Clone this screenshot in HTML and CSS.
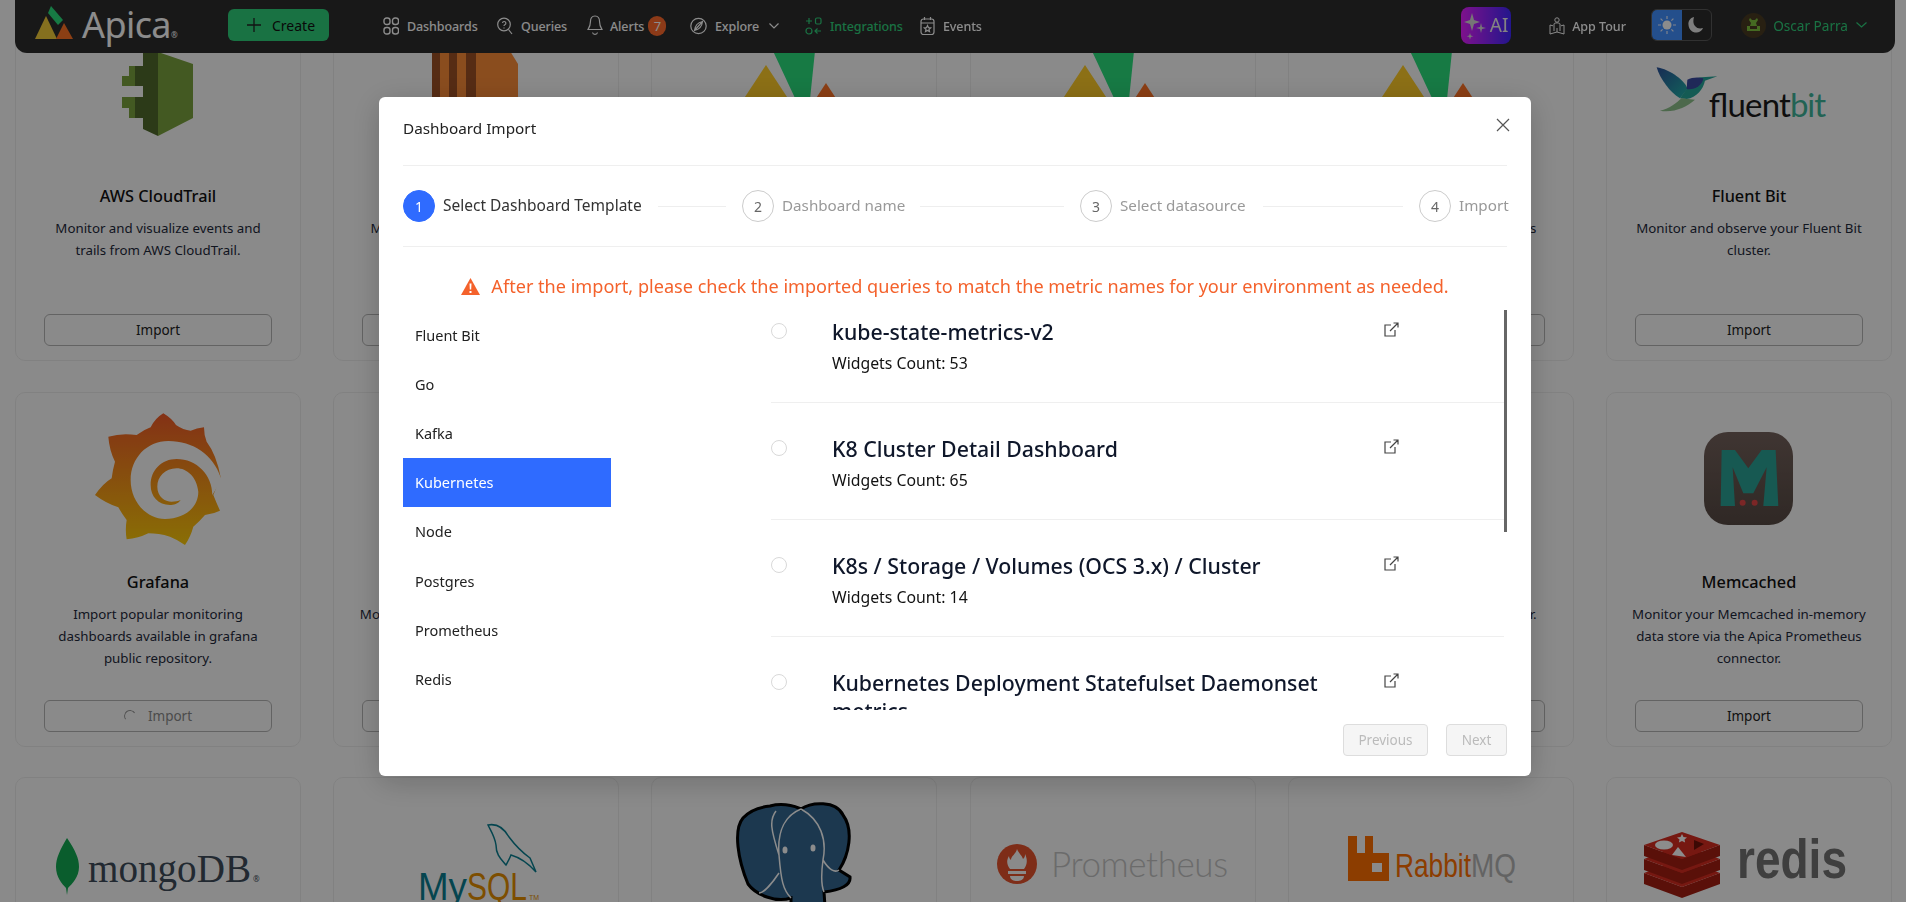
FILE: index.html
```html
<!DOCTYPE html>
<html lang="en">
<head>
<meta charset="utf-8">
<title>Integrations</title>
<link rel="stylesheet" href="styles.css">
</head>
<body>
<header class="nav">
  <div class="brand">
    <svg class="brand-mark" width="40" height="36" viewBox="0 0 40 36"><polygon points="11,10 22,33 0,33" fill="#f2cd3a"/><polygon points="16,0 28,14 23,19 13,7" fill="#2ade7d"/><polygon points="29,17 38,33 21,33" fill="#ff7326"/></svg>
    <span class="brand-name">Apica<sup class="reg">®</sup></span>
  </div>
  <button class="create"><svg width="14" height="14" viewBox="0 0 14 14"><path d="M7 0v14M0 7h14" stroke="#222" stroke-width="1.3"/></svg><span>Create</span></button>
  <nav class="links">
    <a class="link w-dash"><svg width="16" height="18" viewBox="0 0 16 18" fill="none" stroke="currentColor" stroke-width="1.4"><rect x="1" y="1" width="6" height="6.5" rx="2.5"/><rect x="9.5" y="1" width="6" height="6.5" rx="2.5"/><rect x="1" y="10.5" width="6" height="6.5" rx="2.5"/><rect x="9.5" y="10.5" width="6" height="6.5" rx="2.5"/></svg><span>Dashboards</span></a>
    <a class="link w-query"><svg width="16" height="18" viewBox="0 0 16 18" fill="none" stroke="currentColor" stroke-width="1.2"><circle cx="7" cy="7.5" r="6.3"/><path d="M11.5 12.5l3.5 4.5M5.5 6a1.7 1.7 0 1 1 2.3 1.8c-.6.3-.8.7-.8 1.3M7 10.5v1"/></svg><span>Queries</span></a>
    <a class="link w-alert"><svg width="16" height="22" viewBox="0 0 16 22" fill="none" stroke="currentColor" stroke-width="1.2"><path d="M8 1c3.2 0 4.6 2.6 4.6 6 0 4 1.4 5.8 2.4 7.500H1C2 12.800 3.400 11 3.400 7 3.400 3.600 4.800 1 8 1zM5.500 17.500c.5 2.500 4.500 2.500 5 0"/></svg><span>Alerts</span><b class="badge">7</b></a>
    <a class="link w-explore"><svg width="17" height="18" viewBox="0 0 17 18" fill="none" stroke="currentColor" stroke-width="1.2"><circle cx="8.5" cy="9" r="7.7"/><path d="M4.500 13.500C5 9 8 5.500 12.500 4.500 12 9 9 12.500 4.500 13.500zM4.500 13.500L12.500 4.500"/></svg><span>Explore</span><svg class="chev" width="10" height="6" viewBox="0 0 10 6" fill="none" stroke="currentColor" stroke-width="1.2"><path d="M.5.500L5 5l4.500-4.500"/></svg></a>
    <a class="link current w-integ"><svg width="17" height="18" viewBox="0 0 17 18" fill="none" stroke="currentColor" stroke-width="1.2"><path d="M4 1v6M1 4h6"/><rect x="10.5" y="1" width="5.5" height="6" rx="1.5"/><circle cx="4" cy="14" r="3"/><path d="M16 14h-6M12.500 11.500L10 14l2.500 2.500"/></svg><span>Integrations</span></a>
    <a class="link"><svg width="15" height="20" viewBox="0 0 15 20" fill="none" stroke="currentColor" stroke-width="1.2"><rect x="1" y="3" width="13" height="15.5" rx="2.5"/><path d="M1 7h13M4.500 1v3M10.500 1v3"/><path d="M7.500 9.500l1 2.200 2.200.2-1.700 1.500.5 2.200-2-1.200-2 1.200.5-2.200-1.700-1.500 2.200-.2z"/></svg><span>Events</span></a>
  </nav>
  <div class="nav-end">
    <button class="ai"><svg width="22" height="30" viewBox="0 0 22 30" fill="#d8d8d8"><path d="M8 3l2 7 6 2-6 2-2 7-2-7-6-2 6-2z"/><path d="M17 13l1 4 4 1-4 1-1 4-1-4-4-1 4-1z"/><path d="M6 23l.8 2.500 2.500.8-2.500.8-.8 2.500-.8-2.500-2.500-.8 2.500-.8z"/></svg><span>AI</span></button>
    <a class="tour"><svg width="16" height="18" viewBox="0 0 16 18" fill="none" stroke="currentColor" stroke-width="1"><circle cx="8" cy="3" r="2.200"/><path d="M5 7c0-1.500 6-1.500 6 0v7M5 7v7M1 8v9l7-2 7 2V8l-3 .8M1 8l3 .8M8 11v4"/></svg><span>App Tour</span></a>
    <div class="mode">
      <span class="mode-sun"><svg width="20" height="20" viewBox="0 0 20 20"><circle cx="10" cy="10" r="4.5" fill="#fff"/><g stroke="#e8eeff" stroke-width="1.2"><path d="M10 1v3M10 16v3M1 10h3M16 10h3M3.600 3.600l2 2M14.400 14.400l2 2M3.600 16.400l2-2M14.400 5.600l2-2"/></g></svg></span>
      <span class="mode-moon"><svg width="16" height="18" viewBox="0 0 16 18"><path d="M6 1c-4 1-6 4-5.500 8C1 14 5 17 9 16.500c3-.3 5-2 6-4.500-3 1-6 .5-8-2C5 8 5 4 6 1z" fill="#e6e6e6"/></svg></span>
    </div>
    <a class="user"><svg class="avatar" width="25" height="25" viewBox="0 0 25 25"><circle cx="12.500" cy="12.500" r="12.500" fill="#4a3b22"/><path d="M6 18v-5h3l1-3-2-3 1-2 2 2h3l2-2 1 2-2 3 1 3h3v5z" fill="#7fc23e"/><rect x="9" y="13" width="7" height="3" fill="#4a3b22"/></svg><span>Oscar Parra</span><svg class="chev" width="11" height="6" viewBox="0 0 11 6" fill="none" stroke="currentColor" stroke-width="1.2"><path d="M.5.500l5 4.500 5-4.500"/></svg></a>
  </div>
</header>

<main class="grid">
  <article class="card">
    <div class="logo"><svg width="286" height="160" viewBox="0 0 286 160"><polygon points="143,38 178,50 178,104 143,122" fill="#7ba33e"/><polygon points="128,38 143,38 143,122 128,115" fill="#506a2c"/><rect x="114" y="52" width="6" height="20" fill="#7ba33e"/><rect x="120" y="52" width="8" height="20" fill="#506a2c"/><rect x="107" y="62" width="7" height="10" fill="#7ba33e"/><rect x="114" y="83" width="6" height="21" fill="#7ba33e"/><rect x="120" y="83" width="8" height="21" fill="#506a2c"/><rect x="107" y="83" width="7" height="11" fill="#7ba33e"/></svg></div>
    <h3>AWS CloudTrail</h3><p>Monitor and visualize events and<br>trails from AWS CloudTrail.</p>
    <button class="import">Import</button>
  </article>
  <article class="card covered">
    <div class="logo"><svg width="286" height="160" viewBox="0 0 286 160"><polygon points="104,37 177,37 185,50 185,160 99,160 99,50" fill="#fb8c38"/><rect x="99" y="37" width="44" height="123" fill="#9d5025"/><rect x="107" y="37" width="9" height="123" fill="#fb8c38"/><rect x="124" y="37" width="9" height="123" fill="#fb8c38"/></svg></div>
    <p>Monitor your AWS services and all</p>
    <button class="import"></button>
  </article>
  <article class="card covered">
    <div class="logo"><svg width="286" height="160" viewBox="0 0 286 160"><polygon points="115,51 167,130 63,130" fill="#ffcc28"/><polygon points="122,37 164,37 158,95 150,97" fill="#2ade7d"/><polygon points="175,69 215,130 135,130" fill="#ff7326"/></svg></div>
    <button class="import"></button>
  </article>
  <article class="card covered">
    <div class="logo"><svg width="286" height="160" viewBox="0 0 286 160"><polygon points="115,51 167,130 63,130" fill="#ffcc28"/><polygon points="122,37 164,37 158,95 150,97" fill="#2ade7d"/><polygon points="175,69 215,130 135,130" fill="#ff7326"/></svg></div>
    <button class="import"></button>
  </article>
  <article class="card covered">
    <div class="logo"><svg width="286" height="160" viewBox="0 0 286 160"><polygon points="115,51 167,130 63,130" fill="#ffcc28"/><polygon points="122,37 164,37 158,95 150,97" fill="#2ade7d"/><polygon points="175,69 215,130 135,130" fill="#ff7326"/></svg></div>
    <p>Monitor your host and all services</p>
    <button class="import"></button>
  </article>
  <article class="card">
    <div class="logo"><svg width="286" height="160" viewBox="0 0 286 160"><defs><linearGradient id="bw" x1="0" y1="0" x2="1" y2="1"><stop offset="0" stop-color="#2a4f9a"/><stop offset="1" stop-color="#22b5a8"/></linearGradient></defs><g transform="translate(-76,25) scale(.3333)"><path d="M380 85C420 90 470 130 472 150L450 178C420 160 390 120 380 85Z" fill="url(#bw)"/><path d="M470 150C480 125 500 115 515 115L562 112 525 125C520 150 500 175 470 180L450 178Z" fill="#26a69a"/><path d="M472 122C485 115 505 113 520 118 518 140 490 155 470 150Z" fill="#3a4aa0"/><path d="M390 215C420 210 440 190 455 178L495 182C470 205 430 222 390 215Z" fill="#8cc08a"/></g><text class="lg-fluent" x="102" y="103" textLength="82" lengthAdjust="spacing">fluent</text><text class="lg-bit" x="184" y="103" textLength="36" lengthAdjust="spacing">bit</text></svg></div>
    <h3>Fluent Bit</h3><p>Monitor and observe your Fluent Bit<br>cluster.</p>
    <button class="import">Import</button>
  </article>

  <article class="card">
    <div class="logo"><svg width="286" height="160" viewBox="0 0 286 160"><defs><linearGradient id="gf" gradientUnits="userSpaceOnUse" x1="0" y1="100" x2="0" y2="495"><stop offset="0" stop-color="#f05a28"/><stop offset="1" stop-color="#fbca0a"/></linearGradient></defs><g transform="translate(-15,-20) scale(.3333)"><path d="M490 100Q515 115 528 135Q550 150 572 152Q590 145 612 142Q612 165 620 185Q650 225 662 292L640 345Q650 370 660 392Q640 402 615 405Q598 425 580 440Q572 470 555 495Q535 480 510 470Q475 460 445 460Q415 475 380 478Q375 450 380 420Q365 400 355 382Q318 370 285 345Q310 310 335 295Q338 270 345 245Q328 210 325 170Q365 158 410 165Q430 150 452 142Q465 115 490 100Z" fill="url(#gf)"/><path d="M662 292C640 225 580 183 505 183C440 183 392 235 392 300C392 365 440 417 495 417C550 417 595 385 595 335C590 290 560 265 530 265C495 265 472 290 472 320C472 350 495 365 515 365C525 365 535 364 542 360C535 372 520 375 510 375C475 375 452 350 452 315C452 270 485 237 530 237C590 237 637 285 637 345L665 300Z" fill="#fcfcfc"/></g></svg></div>
    <h3>Grafana</h3><p>Import popular monitoring<br>dashboards available in grafana<br>public repository.</p>
    <button class="import busy"><i class="spin"></i>Import</button>
  </article>
  <article class="card covered">
    <div class="logo"></div>
    <p>Monitor your host infrastructure with</p>
    <button class="import"></button>
  </article>
  <article class="card covered">
    <div class="logo"></div>
    <button class="import"></button>
  </article>
  <article class="card covered">
    <div class="logo"></div>
    <button class="import"></button>
  </article>
  <article class="card covered">
    <div class="logo"></div>
    <p>Monitor logs using this connector.</p>
    <button class="import"></button>
  </article>
  <article class="card">
    <div class="logo"><svg width="286" height="160" viewBox="0 0 286 160"><defs><linearGradient id="mc" x1="0" y1="0" x2="0" y2="1"><stop offset="0" stop-color="#74625c"/><stop offset="1" stop-color="#574a44"/></linearGradient></defs><rect x="98" y="32" width="89" height="93" rx="24" fill="url(#mc)"/><g transform="translate(-76,-20) scale(.3333)"><path d="M575 210H615L655 265 695 210H737L745 378H700L710 262 670 340H640L608 262 615 378H572Z" fill="#2aa296"/><circle cx="638" cy="368" r="9" fill="#e04545"/><circle cx="674" cy="368" r="9" fill="#e04545"/></g></svg></div>
    <h3>Memcached</h3><p>Monitor your Memcached in-memory<br>data store via the Apica Prometheus<br>connector.</p>
    <button class="import">Import</button>
  </article>

  <article class="card">
    <div class="logo"><svg width="286" height="160" viewBox="0 0 286 160"><path d="M52 53C60 65 64 73 64 82 64 92 57 99 53 103L52 110 51 103C47 99 41 92 41 82 41 73 45 65 52 53Z" fill="#13aa52"/><text class="lg-mongo" x="73" y="97" textLength="163" lengthAdjust="spacingAndGlyphs">mongoDB</text><text class="lg-reg" x="238" y="97">®</text></svg></div>
  </article>
  <article class="card">
    <div class="logo"><svg width="286" height="160" viewBox="0 0 286 160"><path d="M155 40C165 38 172 45 176 52 182 60 190 68 197 73L203 87C195 78 185 72 178 70 176 75 174 78 173 80 168 74 163 70 163 60 162 52 158 46 155 40Z" fill="none" stroke="#0a7f91" stroke-width="1.5"/><text class="lg-my" x="85" y="115" textLength="49" lengthAdjust="spacingAndGlyphs">My</text><text class="lg-sql" x="134" y="115" textLength="60" lengthAdjust="spacingAndGlyphs">SQL</text><text class="lg-tm" x="196" y="115">TM</text></svg></div>
  </article>
  <article class="card">
    <div class="logo"><svg width="286" height="160" viewBox="0 0 286 160"><path d="M119 21C135 17 145 22 150 24 160 17 185 15 192 30 203 45 198 70 188 85L199 92C200 100 190 105 173 107L176 150H140V113C125 118 105 110 97 99 87 75 82 45 92 33 100 24 110 22 119 21Z" fill="#336791" stroke="#000" stroke-width="3"/><path d="M150 24C135 30 126 45 128 70 130 95 132 105 140 113M150 24C170 35 176 55 172 75 170 90 170 100 173 107M128 70C120 45 118 35 125 26M128 88C120 100 112 108 108 108M172 75C178 85 184 88 188 85" fill="none" stroke="#fff" stroke-width="1.5"/><ellipse cx="134" cy="65" rx="2.5" ry="3.5" fill="#fff"/><ellipse cx="162" cy="63" rx="2.5" ry="3.5" fill="#fff"/></svg></div>
  </article>
  <article class="card">
    <div class="logo"><svg width="286" height="160" viewBox="0 0 286 160"><circle cx="47" cy="79" r="20" fill="#e6522c"/><path d="M47 64C49 69 52 70 53 74 55 72 55 71 55 69 58 75 57 80 54 84H40C37 80 36 76 39 71 39 73 40 74 41 75 41 71 46 69 47 64Z" fill="#fcfcfc"/><path d="M38 86H56V89H38ZM40 91H54C54 95 50 96 47 96 44 96 40 95 40 91Z" fill="#fcfcfc"/><text class="lg-prom" x="81" y="92" textLength="177" lengthAdjust="spacing">Prometheus</text></svg></div>
  </article>
  <article class="card">
    <div class="logo"><svg width="286" height="160" viewBox="0 0 286 160"><path fill-rule="evenodd" d="M60 51H69V68H77V51H85V68H101V96H60ZM84 78V87H94V78Z" fill="#ff6f00"/><text class="lg-rabbit" x="107" y="92" textLength="76" lengthAdjust="spacingAndGlyphs">Rabbit</text><text class="lg-mq" x="183" y="92" textLength="45" lengthAdjust="spacingAndGlyphs">MQ</text></svg></div>
  </article>
  <article class="card">
    <div class="logo"><svg width="286" height="160" viewBox="0 0 286 160"><path d="M38 88V99L76 113 114 99V88L76 102Z" fill="#a41e11"/><path d="M38 88L76 74 114 88 76 102Z" fill="#d82c20"/><path d="M38 74V85L76 99 114 85V74L76 88Z" fill="#a41e11"/><path d="M38 74L76 60 114 74 76 88Z" fill="#d82c20"/><path d="M38 60V71L76 85 114 71V60L76 74Z" fill="#a41e11"/><path d="M38 60L76 47 114 60 76 74Z" fill="#d82c20"/><ellipse cx="58" cy="60" rx="9" ry="4.5" fill="#fff"/><path d="M76 49l1.500 3 3.500.5-2.500 2 .6 3-3.100-1.500-3.100 1.500.6-3-2.500-2 3.500-.5z" fill="#fff"/><path d="M72 62L80 72 66 70Z" fill="#fff"/><path d="M88 55L98 59 88 65Z" fill="#6d1109"/><text class="lg-redis" x="131" y="93" textLength="110" lengthAdjust="spacingAndGlyphs">redis</text></svg></div>
  </article>
</main>

<div class="overlay"></div>

<section class="modal">
  <header class="modal-head">
    <h2>Dashboard Import</h2>
    <button class="close" aria-label="Close"><svg width="14" height="14" viewBox="0 0 14 14"><path d="M1 1l12 12M13 1L1 13" stroke="#555" stroke-width="1.2"/></svg></button>
  </header>
  <ol class="steps">
    <li class="step on s1"><i>1</i><span>Select Dashboard Template</span></li><li class="rail r1"></li>
    <li class="step s2"><i>2</i><span>Dashboard name</span></li><li class="rail r2"></li>
    <li class="step s3"><i>3</i><span>Select datasource</span></li><li class="rail r3"></li>
    <li class="step s4"><i>4</i><span>Import</span></li>
  </ol>
  <div class="warn">
    <svg width="19" height="17" viewBox="0 0 19 17"><path d="M9.500 0L19 17H0Z" fill="#f4622c"/><path d="M8.500 5.500h2l-.3 6h-1.400zM8.500 13h2v2h-2z" fill="#fff"/></svg>
    <span>After the import, please check the imported queries to match the metric names for your environment as needed.</span>
  </div>
  <div class="body">
    <ul class="cats">
      <li>Fluent Bit</li><li>Go</li><li>Kafka</li><li class="sel">Kubernetes</li><li>Node</li><li>Postgres</li><li>Prometheus</li><li>Redis</li>
    </ul>
    <div class="tpls">
      <div class="tpl-scroll">
        <div class="tpl"><i class="radio"></i><div class="tpl-text"><h4>kube-state-metrics-v2</h4><p>Widgets Count: 53</p></div><svg class="ext" width="15" height="15" viewBox="0 0 15 15" fill="none" stroke="#444" stroke-width="1.2"><path d="M7 3H1v11h10V8M6 9L14 1M9.500 1H14v4.500"/></svg></div>
        <div class="tpl"><i class="radio"></i><div class="tpl-text"><h4>K8 Cluster Detail Dashboard</h4><p>Widgets Count: 65</p></div><svg class="ext" width="15" height="15" viewBox="0 0 15 15" fill="none" stroke="#444" stroke-width="1.2"><path d="M7 3H1v11h10V8M6 9L14 1M9.500 1H14v4.500"/></svg></div>
        <div class="tpl"><i class="radio"></i><div class="tpl-text"><h4>K8s / Storage / Volumes (OCS 3.x) / Cluster</h4><p>Widgets Count: 14</p></div><svg class="ext" width="15" height="15" viewBox="0 0 15 15" fill="none" stroke="#444" stroke-width="1.2"><path d="M7 3H1v11h10V8M6 9L14 1M9.500 1H14v4.500"/></svg></div>
        <div class="tpl"><i class="radio"></i><div class="tpl-text"><h4>Kubernetes Deployment Statefulset Daemonset metrics</h4></div><svg class="ext" width="15" height="15" viewBox="0 0 15 15" fill="none" stroke="#444" stroke-width="1.2"><path d="M7 3H1v11h10V8M6 9L14 1M9.500 1H14v4.500"/></svg></div>
      </div>
      <i class="thumb"></i>
    </div>
  </div>
  <footer class="modal-foot">
    <button class="btn prev">Previous</button>
    <button class="btn next">Next</button>
  </footer>
</section>
</body>
</html>
```
FILE: styles.css
```css
* { box-sizing: border-box; }
html, body { margin: 0; height: 902px; overflow: hidden; }
body { background: #fcfcfc; font-family: "Noto Sans", "Open Sans", sans-serif; color: #1e293b; }
button { font-family: inherit; }

.nav { position: fixed; z-index: 2; top: 0; left: 15px; width: 1880px; height: 53px; background: #2d2d2d; border-radius: 0 0 12px 12px; display: flex; align-items: center; padding: 0 0 3px 20px; color: #fff; }
.brand { display: flex; align-items: center; width: 193px; }
.brand-mark { margin: 0 7px 3px 0; }
.brand-name { font-size: 36px; line-height: 1; letter-spacing: -.6px; }
.reg { font-size: 8px; vertical-align: baseline; }
.create { width: 101px; height: 32px; background: #2fd07b; border: 0; border-radius: 6px; display: flex; align-items: center; gap: 11px; padding: 0 0 0 19px; font-size: 14px; color: #111; }
.links { display: flex; align-items: center; margin: 2px 0 0 54px; font-size: 12.5px; font-weight: 500; letter-spacing: -.1px; }
.link { display: flex; align-items: center; gap: 8px; }
.link.current { color: #2fd07b; }
.w-dash { width: 114px; }
.w-query { width: 90px; }
.w-alert { width: 103px; gap: 7px; }
.w-explore { width: 115px; }
.w-integ { width: 115px; }
.badge { width: 18px; height: 20px; margin-left: -3px; border-radius: 10px; background: #ff6b2c; color: #fff; font-weight: 400; font-size: 13px; text-align: center; line-height: 20px; }
.chev { margin-left: 2px; }
.nav-end { margin-left: auto; display: flex; align-items: center; padding-right: 28px; }
.ai { width: 50px; height: 37px; border: 0; border-radius: 8px; background: linear-gradient(90deg, #e620ff, #4028ff); display: flex; align-items: center; justify-content: center; gap: 4px; color: #eee; font-size: 19px; padding: 0; }
.tour { display: flex; align-items: center; gap: 7px; margin: 2px 0 0 38px; width: 102px; font-size: 12.5px; font-weight: 500; }
.mode { width: 61px; height: 32px; display: flex; border: 1px solid #5a5a5a; border-radius: 6px; overflow: hidden; }
.mode span { flex: 1; display: flex; align-items: center; justify-content: center; }
.mode-sun { background: #4391ff; }
.user { display: flex; align-items: center; gap: 7px; margin-left: 29px; color: #2fd07b; font-size: 13.6px; }
.user .chev { margin-left: 1px; }

.grid { display: grid; grid-template-columns: repeat(6, 286px); grid-auto-rows: 355px; column-gap: 32.2px; row-gap: 30.6px; padding: 6px 0 0 15px; }
.card { border: 1px solid #ececec; border-radius: 10px; display: flex; flex-direction: column; align-items: center; padding: 7px 28px 0; position: relative; }
.logo { width: 286px; height: 160px; flex: none; }
.logo svg { display: block; overflow: visible; }
.card h3 { margin: 10px 0 0; font-size: 16.3px; line-height: 24px; font-weight: 500; color: #111; }
.card p { margin: 9px -10px 0; font-size: 13.3px; line-height: 22px; text-align: center; white-space: nowrap; }
.card.covered p { margin-top: 43px; }
.import { width: 228px; height: 32px; flex: none; margin: auto 0 14px; background: transparent; border: 1px solid #b4b4b4; border-radius: 6px; font-size: 13.5px; color: #222; display: flex; align-items: center; justify-content: center; }
.import.busy { color: #8a8a8a; }
.spin { width: 12px; height: 12px; margin-right: 12px; border-radius: 50%; border: 1.5px solid transparent; border-top-color: #999; border-left-color: #999; transform: rotate(10deg); }

.lg-fluent, .lg-bit { font-family: "Lato", sans-serif; font-size: 33px; font-weight: 400; fill: #1a1a1a; }
.lg-bit { fill: #3fb59a; }
.lg-mongo { font-family: "Liberation Serif", serif; font-size: 39px; fill: #3e4c59; }
.lg-reg { font-size: 8px; fill: #3e4c59; }
.lg-my, .lg-sql { font-family: "Liberation Sans", sans-serif; font-size: 39px; fill: #0a7f91; }
.lg-sql { fill: #e48e00; }
.lg-tm { font-family: "Liberation Sans", sans-serif; font-size: 7px; fill: #e48e00; }
.lg-prom { font-family: "Lato", sans-serif; font-size: 35px; font-weight: 300; fill: #c4c4c4; }
.lg-rabbit, .lg-mq { font-family: "Liberation Sans", sans-serif; font-size: 33px; fill: #ff6f00; }
.lg-mq { fill: #b5b5b5; }
.lg-redis { font-family: "Liberation Sans", sans-serif; font-size: 55px; font-weight: 700; fill: #737373; }

.overlay { position: fixed; z-index: 3; inset: 0; background: rgba(0, 0, 0, .45); }

.modal { position: fixed; z-index: 4; left: 379px; top: 97px; width: 1152px; height: 679px; padding: 0 24px; background: #fff; border-radius: 6px; box-shadow: 0 6px 30px rgba(0, 0, 0, .2); display: flex; flex-direction: column; }
.modal-head { height: 69px; flex: none; display: flex; align-items: flex-start; justify-content: space-between; border-bottom: 1px solid #efefef; }
.modal-head h2 { margin: 19px 0 0; font-size: 15.3px; line-height: 24px; font-weight: 400; color: #222; }
.close { border: 0; background: none; padding: 0; margin: 21px -3px 0 0; height: 14px; }
.steps { list-style: none; margin: 0; padding: 24px 0 0; height: 81px; flex: none; display: flex; align-items: flex-start; border-bottom: 1px solid #efefef; }
.step { display: flex; align-items: center; gap: 8px; font-size: 15.2px; line-height: 32px; color: #999; white-space: nowrap; }
.step span { margin-top: -2px; }
.step i { width: 32px; height: 32px; flex: none; border: 1px solid #ccc; border-radius: 50%; font-style: normal; font-size: 14px; text-align: center; line-height: 32px; color: #666; }
.step.on { color: #333; font-size: 15.5px; }
.step.on i { background: #2f6bff; border-color: #2f6bff; color: #fff; }
.s1 { width: 239px; }
.s2 { width: 162px; }
.s3 { width: 167px; }
.s4 { width: 88px; }
.rail { height: 1px; margin: 16px 16px 0; background: #eee; }
.r1 { width: 68px; }
.r2 { width: 144px; }
.r3 { width: 140px; }
.warn { height: 63px; flex: none; padding-top: 15px; display: flex; align-items: center; justify-content: center; gap: 11px; color: #f4622c; font-size: 18.1px; }
.body { display: flex; height: 400px; flex: none; overflow: hidden; }
.cats { list-style: none; margin: 0 160px 0 0; padding: 0; width: 208px; flex: none; }
.cats li { height: 49.2px; padding: 0 0 0 12px; display: flex; align-items: center; font-size: 14.5px; color: #222; }
.cats .sel { background: #2f6bff; color: #fff; }
.tpls { position: relative; flex: 1; overflow: hidden; }
.tpl-scroll { margin-top: -24px; padding-right: 3px; }
.tpl { height: 117px; border-bottom: 1px solid #efefef; display: flex; align-items: flex-start; padding-top: 32px; }
.radio { width: 16px; height: 16px; flex: none; margin: 5px 45px 0 0; border: 1px solid #d9d9d9; border-radius: 50%; }
.tpl-text { width: 552px; flex: none; padding-right: 30px; }
.tpl-text h4 { margin: 0; font-size: 21.3px; line-height: 28px; font-weight: 500; color: #0f172a; }
.tpl-text p { margin: 6px 0 0; font-size: 15.8px; line-height: 22px; color: #111; }
.ext { margin-top: 4px; }
.thumb { position: absolute; right: 0; top: 0; width: 3px; height: 222px; background: #666; }
.modal-foot { display: flex; justify-content: flex-end; gap: 18px; padding-top: 14px; }
.btn { height: 32px; background: #f5f5f5; border: 1px solid #ddd; border-radius: 4px; font-size: 13.5px; color: #bbb; padding: 0; }
.prev { width: 85px; }
.next { width: 61px; }
```
